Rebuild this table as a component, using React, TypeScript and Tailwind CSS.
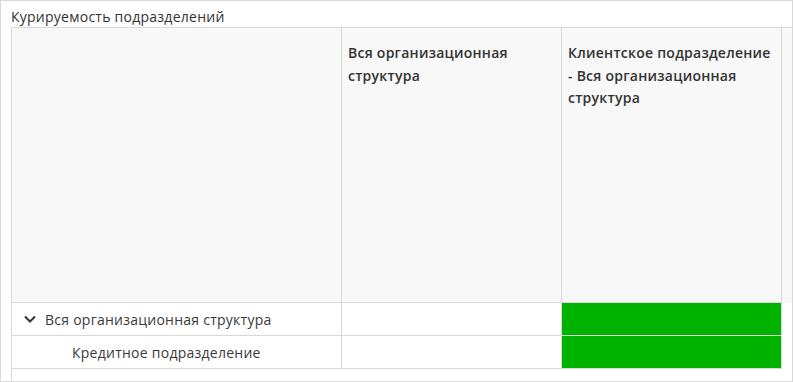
import { ReactNode } from "react";

const cols = [
  { id: "all", title: "Вся организационная структура" },
  { id: "client", title: "Клиентское подразделение - Вся организационная структура" },
];

const rows = [
  { id: 1, name: "Вся организационная структура", level: 0, expanded: true, cells: [false, true] },
  { id: 2, name: "Кредитное подразделение", level: 1, cells: [false, true] },
];

const Chevron = () => (
  <svg width="12" height="8" viewBox="0 0 12 8" className="shrink-0 text-[#333]">
    <polyline points="1,1.5 6,6.5 11,1.5" fill="none" stroke="currentColor" strokeWidth="2" />
  </svg>
);

const Cell = ({ className, children }: { className?: string; children?: ReactNode }) => (
  <div className={"border-r border-b border-[#d9d9d9] " + (className ?? "")}>{children}</div>
);

export default function App() {
  return (
    <div className="w-[793px] h-[382px] border border-[#d9d9d9] bg-white flex flex-col font-['Open_Sans',sans-serif] text-[#333] text-[14px] tracking-[0.25px]">
      {/* Caption */}
      <div className="h-[26px] shrink-0 pl-[10px] pt-[6px] leading-[20px]">Курируемость подразделений</div>

      {/* Matrix */}
      <div className="flex-1 ml-[10px] border-l border-t border-[#d9d9d9] flex flex-col">
        <div className="flex h-[275px] bg-[#f8f8f8]">
          <Cell className="w-[330px]" />
          {cols.map(c => (
            <Cell key={c.id} className="w-[220px] pl-[6px] pr-[6px] pt-[14px] font-semibold leading-[22.5px]">
              {c.title}
            </Cell>
          ))}
        </div>
        {rows.map(r => (
          <div key={r.id} className="flex h-[33px]">
            <Cell className={"w-[330px] flex items-center gap-[9px] " + (r.level === 0 ? "pl-[12px]" : "pl-[60px]")}>
              {r.expanded && <Chevron />}
              <span className="leading-[20px] pt-[2px] text-[#3a3a3a]">{r.name}</span>
            </Cell>
            {r.cells.map((on, i) => (
              <Cell key={i} className={"w-[220px] " + (on ? "bg-[#00b200]" : "")} />
            ))}
          </div>
        ))}
      </div>
    </div>
  );
}
